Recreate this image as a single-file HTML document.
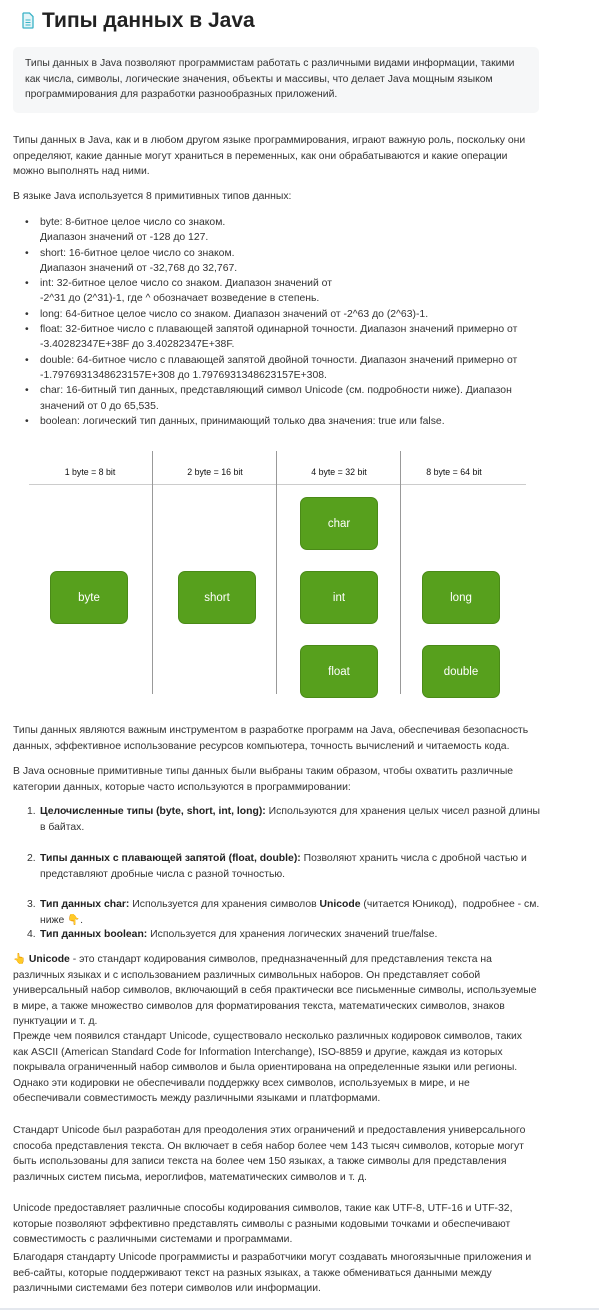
<!DOCTYPE html>
<html><head><meta charset="utf-8"><style>
body{margin:0;width:599px;height:1310px;background:#fff;position:relative;overflow:hidden;font-family:"Liberation Sans","DejaVu Sans",sans-serif;color:#333;}
.p{position:absolute;left:13px;font-size:10.4px;line-height:15.6px;white-space:nowrap;}
b{color:#222;}
.bx{position:absolute;width:78px;height:53px;background:#57a01d;border:1px solid #4a8a18;border-radius:7px;color:#fff;font-size:11.5px;display:flex;align-items:center;justify-content:center;box-sizing:border-box;}
.vl{position:absolute;top:451px;width:1px;height:243px;background:#999;}
.hd{position:absolute;top:467px;font-size:8.8px;color:#111;width:124px;text-align:center;}
.li{position:absolute;font-size:10.4px;line-height:15.6px;white-space:nowrap;}
</style></head><body>
<svg style="position:absolute;left:22px;top:12px" width="12" height="17" viewBox="0 0 12 17"><path d="M1.5 1h6l3.5 3.5v11a.5.5 0 0 1-.5.5h-9a.5.5 0 0 1-.5-.5V1.5z" fill="#e3f5f8" stroke="#3ab2c6" stroke-width="1.3"/><path d="M3.5 8h5M3.5 10.5h5M3.5 13h5" stroke="#3ab2c6" stroke-width="1"/></svg>
<div style="position:absolute;left:42px;top:9px;font-size:21px;font-weight:bold;color:#222">Типы данных в Java</div>
<div style="position:absolute;left:13px;top:47px;width:526px;height:66px;background:#f6f7f8;border-radius:5px"></div>
<div class="p" style="left:25px;top:56px">Типы данных в Java позволяют программистам работать с различными видами информации, такими<br>как числа, символы, логические значения, объекты и массивы, что делает Java мощным языком<br>программирования для разработки разнообразных приложений.</div>
<div class="p" style="top:133px">Типы данных в Java, как и в любом другом языке программирования, играют важную роль, поскольку они<br>определяют, какие данные могут храниться в переменных, как они обрабатываются и какие операции<br>можно выполнять над ними.</div>
<div class="p" style="top:189px">В языке Java используется 8 примитивных типов данных:</div>
<div class="p" style="left:25px;top:215px;line-height:15.3px">•<br><br>•<br><br>•<br><br>•<br>•<br><br>•<br><br>•<br><br>•</div>
<div class="p" style="left:40px;top:215px;line-height:15.3px">byte: 8-битное целое число со знаком.<br>Диапазон значений от -128 до 127.<br>short: 16-битное целое число со знаком.<br>Диапазон значений от -32,768 до 32,767.<br>int: 32-битное целое число со знаком. Диапазон значений от<br>-2^31 до (2^31)-1, где ^ обозначает возведение в степень.<br>long: 64-битное целое число со знаком. Диапазон значений от -2^63 до (2^63)-1.<br>float: 32-битное число с плавающей запятой одинарной точности. Диапазон значений примерно от<br>-3.40282347E+38F до 3.40282347E+38F.<br>double: 64-битное число с плавающей запятой двойной точности. Диапазон значений примерно от<br>-1.7976931348623157E+308 до 1.7976931348623157E+308.<br>char: 16-битный тип данных, представляющий символ Unicode (см. подробности ниже). Диапазон<br>значений от 0 до 65,535.<br>boolean: логический тип данных, принимающий только два значения: true или false.</div>

<div style="position:absolute;left:29px;top:484px;width:497px;height:1px;background:#ccc"></div>
<div class="vl" style="left:152px"></div><div class="vl" style="left:276px"></div><div class="vl" style="left:400px"></div>
<div class="hd" style="left:28px">1 byte = 8 bit</div>
<div class="hd" style="left:153px">2 byte = 16 bit</div>
<div class="hd" style="left:277px">4 byte = 32 bit</div>
<div class="hd" style="left:392px">8 byte = 64 bit</div>
<div class="bx" style="left:50px;top:571px">byte</div>
<div class="bx" style="left:178px;top:571px">short</div>
<div class="bx" style="left:300px;top:497px">char</div>
<div class="bx" style="left:300px;top:571px">int</div>
<div class="bx" style="left:300px;top:645px">float</div>
<div class="bx" style="left:422px;top:571px">long</div>
<div class="bx" style="left:422px;top:645px">double</div>

<div class="p" style="top:723px">Типы данных являются важным инструментом в разработке программ на Java, обеспечивая безопасность<br>данных, эффективное использование ресурсов компьютера, точность вычислений и читаемость кода.</div>
<div class="p" style="top:764px">В Java основные примитивные типы данных были выбраны таким образом, чтобы охватить различные<br>категории данных, которые часто используются в программировании:</div>
<div class="li" style="left:27px;top:804px">1.</div>
<div class="li" style="left:40px;top:804px"><b>Целочисленные типы (byte, short, int, long):</b> Используются для хранения целых чисел разной длины<br>в байтах.</div>
<div class="li" style="left:27px;top:851px">2.</div>
<div class="li" style="left:40px;top:851px"><b>Типы данных с плавающей запятой (float, double):</b> Позволяют хранить числа с дробной частью и<br>представляют дробные числа с разной точностью.</div>
<div class="li" style="left:27px;top:897px">3.</div>
<div class="li" style="left:40px;top:897px"><b>Тип данных char:</b> Используется для хранения символов <b>Unicode</b> (читается Юникод),&nbsp; подробнее - см.<br>ниже <span style="color:#f4b400">👇</span>.</div>
<div class="li" style="left:27px;top:927px">4.</div>
<div class="li" style="left:40px;top:927px"><b>Тип данных boolean:</b> Используется для хранения логических значений true/false.</div>
<div class="p" style="top:952px"><span style="color:#f4b400">👆</span> <b>Unicode</b> - это стандарт кодирования символов, предназначенный для представления текста на<br>различных языках и с использованием различных символьных наборов. Он представляет собой<br>универсальный набор символов, включающий в себя практически все письменные символы, используемые<br>в мире, а также множество символов для форматирования текста, математических символов, знаков<br>пунктуации и т. д.</div>
<div class="p" style="top:1029px">Прежде чем появился стандарт Unicode, существовало несколько различных кодировок символов, таких<br>как ASCII (American Standard Code for Information Interchange), ISO-8859 и другие, каждая из которых<br>покрывала ограниченный набор символов и была ориентирована на определенные языки или регионы.<br>Однако эти кодировки не обеспечивали поддержку всех символов, используемых в мире, и не<br>обеспечивали совместимость между различными языками и платформами.</div>
<div class="p" style="top:1123px">Стандарт Unicode был разработан для преодоления этих ограничений и предоставления универсального<br>способа представления текста. Он включает в себя набор более чем 143 тысяч символов, которые могут<br>быть использованы для записи текста на более чем 150 языках, а также символы для представления<br>различных систем письма, иероглифов, математических символов и т. д.</div>
<div class="p" style="top:1201px">Unicode предоставляет различные способы кодирования символов, такие как UTF-8, UTF-16 и UTF-32,<br>которые позволяют эффективно представлять символы с разными кодовыми точками и обеспечивают<br>совместимость с различными системами и программами.</div>
<div class="p" style="top:1250px">Благодаря стандарту Unicode программисты и разработчики могут создавать многоязычные приложения и<br>веб-сайты, которые поддерживают текст на разных языках, а также обмениваться данными между<br>различными системами без потери символов или информации.</div>
<div style="position:absolute;left:0;top:1308px;width:599px;height:2px;background:#e4e8ee"></div>
</body></html>
